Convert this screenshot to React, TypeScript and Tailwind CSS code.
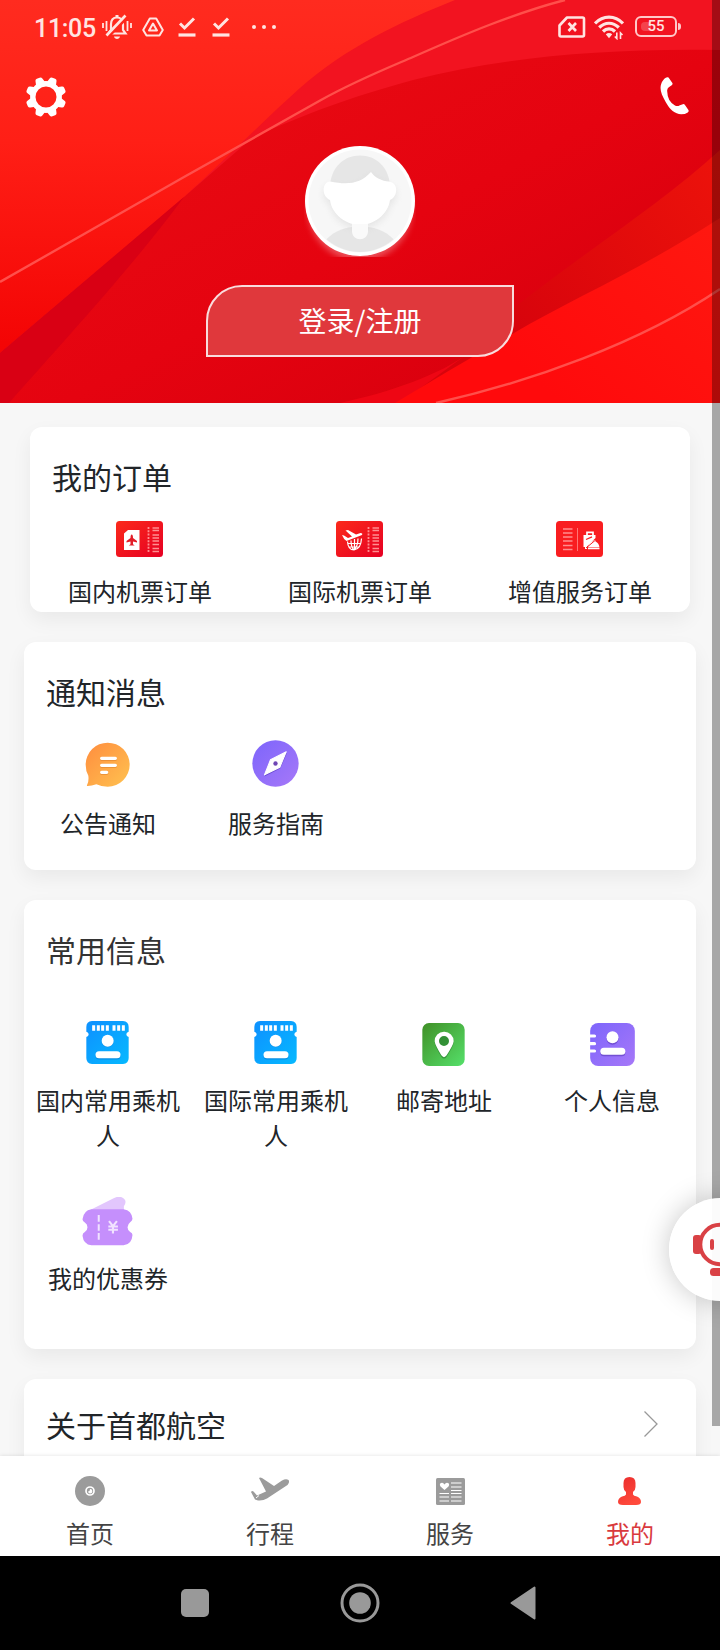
import type { ReactNode } from "react";

const HeaderBackground = () => (
  <svg viewBox="0 0 720 403" className="absolute inset-0 w-full h-full" fill="none">
    <defs>
      <linearGradient id="base" x1="0" y1="0" x2="0" y2="1">
        <stop offset="0" stopColor="#ff2b1f" />
        <stop offset="0.35" stopColor="#ff1f16" />
        <stop offset="0.85" stopColor="#f40505" />
        <stop offset="1" stopColor="#f40004" />
      </linearGradient>
      <linearGradient id="deep" x1="300" y1="60" x2="480" y2="400" gradientUnits="userSpaceOnUse">
        <stop offset="0" stopColor="#e70a12" />
        <stop offset="0.5" stopColor="#e50310" />
        <stop offset="1" stopColor="#d9000e" />
      </linearGradient>
      <linearGradient id="fold" x1="720" y1="170" x2="520" y2="330" gradientUnits="userSpaceOnUse">
        <stop offset="0" stopColor="#ec120b" />
        <stop offset="1" stopColor="#d8040c" />
      </linearGradient>
      <linearGradient id="corner" x1="720" y1="220" x2="560" y2="403" gradientUnits="userSpaceOnUse">
        <stop offset="0" stopColor="#ff1810" />
        <stop offset="1" stopColor="#ff0a0c" />
      </linearGradient>
    </defs>
    <rect width="720" height="403" fill="url(#base)" />
    <path d="M455 0C400 22 345 48 300 88C262 122 225 160 184 197L0 353V403H720V0Z" fill="#f21320" />
    <path d="M720 50C600 48 500 58 413 80C350 97 300 116 252 138L184 197L0 353V403H720Z" fill="url(#deep)" />
    <path d="M184 197L0 353V403H9C60 345 130 270 184 197Z" fill="#d90014" />
    <path d="M720 150C660 205 580 255 510 311L440 372L350 403H720Z" fill="url(#fold)" />
    <path d="M470 352C440 375 390 392 340 403H400Z" fill="#ee0614" />
    <path d="M720 218C640 270 570 300 514 333C470 358 430 382 395 403H720Z" fill="url(#corner)" />
    <path d="M0 282L184 177L321 100C355 81 385 69 413 57C465 34 515 13 565 0" stroke="#ff4f4b" strokeWidth="2.400" />
    <path d="M436 403C530 382 640 343 720 289" stroke="#ff4f4b" strokeWidth="2.400" />
  </svg>
);

const CheckIcon = () => (
  <svg viewBox="0 0 18 20" className="w-[18px] h-5" fill="none" stroke="#ffe4e1">
    <path d="M2 6.500L6.500 11L16 1.500" strokeWidth="3" />
    <path d="M.5 18H17.500" strokeWidth="3.200" />
  </svg>
);

const StatusBar = () => (
  <div className="relative flex h-[54px] items-center pl-[34px] pr-[39px] text-[#ffe4e1]">
    <span className="w-[62px] font-[Roboto] text-[25px] font-medium leading-none tracking-[-0.3px] whitespace-nowrap pt-[3px]">11:05</span>
    <svg viewBox="0 0 30 26" className="ml-1.5 w-[30px] h-[26px]" fill="none" stroke="currentColor" strokeWidth="2.200">
      <path d="M6.500 19.500H23.500L21 16V10.500C21 6 18.500 3.500 15 3.500C11.500 3.500 9 6 9 10.500V16Z" />
      <path d="M15 1V4" strokeWidth="3" />
      <path d="M12 22.500H18C17.500 25.800 12.500 25.800 12 22.500Z" fill="currentColor" stroke="none" />
      <path d="M1 9V14M4.500 7V17M25.500 7V17M29 9V14" strokeWidth="1.800" />
      <path d="M6.500 22.500L25.500 3" stroke="#ff281c" strokeWidth="3" />
      <path d="M4.500 21.500L23.500 1.500" strokeWidth="2.600" />
    </svg>
    <svg viewBox="0 0 22 20" className="ml-[10px] w-[22px] h-5" fill="none" stroke="currentColor" strokeWidth="2" strokeLinejoin="round">
      <path d="M7.800 1.500H14.200L20.800 13L17.500 18.500H4.500L1.200 13Z" />
      <path d="M11 6.500L15 13.500H7Z" />
    </svg>
    <div className="ml-3.5 flex gap-4 -mt-px">
      <CheckIcon />
      <CheckIcon />
    </div>
    <div className="ml-[22px] flex gap-1.5">
      {[0, 1, 2].map((v) => (
        <span key={v} className="w-1 h-1 rounded-full bg-current" />
      ))}
    </div>
    <svg viewBox="0 0 28 22" className="ml-auto w-7 h-[22px]" fill="none" stroke="currentColor" strokeWidth="2.600">
      <path d="M9 1.500H24.500Q26 1.500 26 3V19Q26 20.500 24.500 20.500H3Q1.500 20.500 1.500 19V9.500Z" strokeLinejoin="round" />
      <path d="M10.500 7L18 15M18 7L10.500 15" />
    </svg>
    <svg viewBox="0 0 30 25" className="ml-2 w-[30px] h-[25px]" fill="none" stroke="currentColor" strokeWidth="3.200">
      <path d="M1 8.500C9 0 21 0 29 8.500" />
      <path d="M5.200 12.500C11 6.800 19 6.800 24.800 12.500" />
      <path d="M9 16.500C12.500 13 17.500 13 21 16.500" />
      <path d="M11.800 19.200Q15 16.800 18.200 19.200L15 23.200Z" fill="currentColor" stroke="none" />
      <path d="M22.800 17.500V23.500L20.800 21.500M26.500 24V18L28.500 20" strokeWidth="1.600" />
    </svg>
    <div className="ml-[11px] -mt-0.5 flex items-center gap-px">
      <div className="relative flex w-[42px] h-[21px] items-center justify-center rounded-md border-2 border-[#ffc9c9]">
        <span className="absolute left-1 top-1 bottom-1 w-2.5 rounded-l-sm bg-white/20" />
        <span className="relative font-[Roboto] text-[15px] font-medium leading-none">55</span>
      </div>
      <span className="w-[3px] h-[7px] rounded-r-sm bg-[#ffc9c9]" />
    </div>
  </div>
);

const GearIcon = () => (
  <svg viewBox="-20 -20 40 40" className="w-10 h-10">
    <circle r="13.200" fill="none" stroke="#fff" strokeWidth="5.400" />
    {[22.5, 67.5, 112.5, 157.5, 202.5, 247.5, 292.5, 337.5].map((deg) => (
      <path
        key={deg}
        d="M-5 -13.500L-3.700 -18.500Q-3.300 -20.300 -1.500 -20.300H1.500Q3.300 -20.300 3.700 -18.500L5 -13.500Z"
        fill="#fff"
        transform={`rotate(${deg})`}
      />
    ))}
  </svg>
);

const PhoneIcon = () => (
  <svg viewBox="0 0 87 116" className="mt-px w-[29px] h-[38px]" fill="#fff">
    <path d="M21 1Q25 0 28 5L37 18Q39 22 35 25L26 31Q21 35 21 42Q22 75 45 87Q52 91 60 86L69 83Q73 82 76 86L86 101Q88 105 84 108Q76 114 64 114C45 113 29 99 17 77C6 58 0 44 1 31C2 18 10 4 21 1Z" />
  </svg>
);

const Avatar = () => (
  <svg viewBox="0 0 112 111" className="mt-px w-28 h-[111px] overflow-hidden">
    <defs>
      <clipPath id="face">
        <circle cx="56" cy="55" r="51" />
      </clipPath>
      <filter id="soft" x="-30%" y="-30%" width="160%" height="160%">
        <feGaussianBlur stdDeviation="3" />
      </filter>
    </defs>
    <circle cx="56" cy="63" r="52" fill="#fff" opacity="0.3" filter="url(#soft)" />
    <circle cx="56" cy="55" r="55" fill="#fff" />
    <circle cx="56" cy="55" r="51.500" fill="#f7f7f7" />
    <g clipPath="url(#face)">
      <path d="M26 40C27 21 40 9.500 56 9.500C72 9.500 85 21 86 40Z" fill="#e6e6e6" />
      <path d="M18 98C28 86 38 82 48 81H64C74 82 84 86 94 98V111H18Z" fill="#e6e6e6" />
      <path d="M26 36C44 40 56 39 67 26C71 32 78 35 85 36C95 38 94 52 86 56C83 70 69 80 56 80C43 80 29 70 26 55C17 51 18 37 26 36Z" fill="#ccc" opacity="0.400" filter="url(#soft)" transform="translate(0 3)" />
      <path d="M26 35.500C44 39 56 38 67 26C71 32 78 35 85 35.500C95 37 94 51 86 54C84 69 69 79 56 79C43 79 28 69 26 54C17 50 18 36 26 35.500Z" fill="#fff" />
      <path d="M48 78H64V85C64 96 48 96 48 85Z" fill="#fafafa" />
    </g>
  </svg>
);

const Header = () => (
  <header className="relative flex h-[403px] shrink-0 flex-col">
    <HeaderBackground />
    <StatusBar />
    <div className="relative flex justify-between items-start pl-[25.5px] pr-[31px] pt-[22px] h-[91px]">
      <div className="pt-px">
        <GearIcon />
      </div>
      <PhoneIcon />
    </div>
    <div className="relative flex flex-col items-center">
      <Avatar />
      <button className="mt-7 flex w-[308px] h-[72px] items-center justify-center rounded-tl-[36px] rounded-br-[36px] border-2 border-[#f9dcdd] bg-[#e0383c] pb-0.5 text-[28px] text-white">
        登录/注册
      </button>
    </div>
  </header>
);

const TicketDefs = () => (
  <defs>
    <linearGradient id="ticket" x1="0" y1="0" x2="1" y2="1">
      <stop offset="0" stopColor="#fb2a1b" />
      <stop offset="1" stopColor="#e60023" />
    </linearGradient>
  </defs>
);

const TicketStub = () => (
  <>
    <path d="M32.500 6V32" stroke="#ff8f90" strokeWidth="1.800" strokeDasharray="2 1.300" />
    <path d="M36.500 7H43M36.500 9.500H43M36.500 14H43M36.500 17H43M36.500 20H43M36.500 23.500H43M36.500 27.500H43M36.500 30.500H43" stroke="#ff8f90" strokeWidth="1.400" />
  </>
);

const DomesticTicketIcon = () => (
  <svg viewBox="0 0 47 36" className="w-[47px] h-9">
    <TicketDefs />
    <rect width="47" height="36" rx="3.500" fill="url(#ticket)" />
    <path d="M12 9H23.500V29H8V12.500Z" fill="#fff" />
    <path d="M15.700 13.500Q17 13.500 17 17L21 20V21.500L17 20.500V23.200L18.700 24.500H12.800L14.500 23.200V20.500L10.500 21.500V20L14.500 17Q14.500 13.500 15.700 13.500Z" fill="#e21d28" />
    <TicketStub />
  </svg>
);

const InternationalTicketIcon = () => (
  <svg viewBox="0 0 47 36" className="w-[47px] h-9">
    <rect width="47" height="36" rx="3.500" fill="url(#ticket)" />
    <path d="M6 14L8 14.500L12 17L16 15.500L9.500 9.500L12 9L20 13.500L24.500 12Q27 12 26 14L10.500 20Q7.500 18 6 14Z" fill="#fff" />
    <g fill="none" stroke="#fff" strokeWidth="1.200">
      <path d="M11.500 20.500Q12 29 18 29Q25 28 25.500 17.500M11.500 22.500H25M13 26H23.500M18.500 18V29M15 19.500Q15 26 18 29M22 17.500Q22 25 18 29" />
    </g>
    <TicketStub />
  </svg>
);

const ServiceTicketIcon = () => (
  <svg viewBox="0 0 47 36" className="w-[47px] h-9">
    <rect width="47" height="36" rx="3.500" fill="#f91d20" />
    <path d="M7 8H16.500M7 12H16.500M7 16H16.500M7 20H16.500M7 24.500H16.500M7 28.500H16.500" stroke="#ff8d8d" strokeWidth="1.600" />
    <path d="M21.500 7V30" stroke="#ff7474" strokeWidth="1" />
    <path d="M31 14V11.300H37V14" fill="none" stroke="#fff" strokeWidth="1.700" />
    <path d="M27.500 14H39.500V17L31 25.500V28H29V26H27.500Z" fill="#fff" />
    <path d="M30 18.500L36 15.800" stroke="#f91d20" strokeWidth="1.300" />
    <path d="M32 26.500C32.500 21.500 35 20.500 37.500 20.300V19H39.500V20.500Q43 22 43.500 26.500ZM32 27H43.500V28.300H32Z" fill="#fff" />
    <path d="M30 27L42 17" stroke="#f91d20" strokeWidth="1" />
  </svg>
);

const NoticeIcon = () => (
  <svg viewBox="0 0 135 135" className="mt-px w-[45px] h-[45px]">
    <defs>
      <linearGradient id="notice" x1="0" y1="0" x2="1" y2="1">
        <stop offset="0.100" stopColor="#ff9240" />
        <stop offset="1" stopColor="#ffc250" />
      </linearGradient>
    </defs>
    <path d="M68 2A66 66 0 1 1 68 134Q48 134 34 127Q20 132 8 132Q4 132 7 127Q12 116 10 101Q2 87 2 68A66 66 0 0 1 68 2Z" fill="url(#notice)" />
    <path d="M50 52H91M50 73H91M50 94H65" stroke="#d97c25" strokeOpacity="0.500" strokeWidth="10" strokeLinecap="round" />
    <path d="M50 49H91M50 70H91M50 91H65" stroke="#fff" strokeWidth="10" strokeLinecap="round" />
  </svg>
);

const GuideIcon = () => (
  <svg viewBox="0 0 140 140" className="w-[47px] h-[47px]">
    <defs>
      <linearGradient id="violet" x1="0" y1="0" x2="1" y2="1">
        <stop offset="0.100" stopColor="#8167fb" />
        <stop offset="1" stopColor="#a678f8" />
      </linearGradient>
    </defs>
    <circle cx="70" cy="70" r="69" fill="url(#violet)" />
    <path d="M104 39L84 85L37 109L55 63Z" fill="#5135b8" opacity="0.600" />
    <path d="M102 35L83 81L37 104L55 59Z" fill="#fff" stroke="#fff" strokeWidth="3" strokeLinejoin="round" />
    <circle cx="70" cy="70" r="6.500" fill="#6e46b4" />
  </svg>
);

const PassengerIcon = () => (
  <svg viewBox="0 0 129 129" className="-mt-0.5 w-[43px] h-[43px]">
    <defs>
      <linearGradient id="blue" x1="0" y1="0" x2="1" y2="1">
        <stop offset="0.100" stopColor="#0d94ff" />
        <stop offset="1" stopColor="#06b9ff" />
      </linearGradient>
    </defs>
    <path d="M18 0H111Q128 1 128 18V32Q121 34 121 40Q121 46 128 48V111Q128 128 111 129H18Q1 128 1 111V48Q8 46 8 40Q8 34 1 32V18Q1 1 18 0Z" fill="url(#blue)" />
    <path d="M23 13V29M37 13V29M50 13V29M64 13V29M84 13V29M98 13V29M112 13V29" stroke="#fff" strokeWidth="9" />
    <circle cx="65" cy="61" r="18" fill="#087bd0" opacity="0.600" />
    <path d="M39 105H93" stroke="#087bd0" strokeOpacity="0.600" strokeWidth="21" strokeLinecap="round" />
    <circle cx="65" cy="59" r="18" fill="#fff" />
    <path d="M39 101H93" stroke="#fff" strokeWidth="21" strokeLinecap="round" />
  </svg>
);

const AddressIcon = () => (
  <svg viewBox="0 0 127 129" className="mt-px w-[43px] h-[43px]">
    <defs>
      <linearGradient id="green" x1="0" y1="0" x2="1" y2="1">
        <stop offset="0.050" stopColor="#41942a" />
        <stop offset="1" stopColor="#55e06a" />
      </linearGradient>
    </defs>
    <rect width="127" height="129" rx="20" fill="url(#green)" />
    <path d="M65 30A28 28 0 0 1 94 59Q93 70 73 101Q65 112 57 101Q38 70 37 59A28 28 0 0 1 65 30Z" fill="#23762a" opacity="0.600" />
    <path fillRule="evenodd" d="M65 26A28 28 0 0 1 94 55Q93 66 73 97Q65 108 57 97Q38 66 37 55A28 28 0 0 1 65 26ZM65 39A15 15 0 1 0 65 69A15 15 0 1 0 65 39Z" fill="#fff" />
  </svg>
);

const ProfileIcon = () => (
  <svg viewBox="0 0 134 129" className="mt-px ml-0.5 w-[45px] h-[43px]">
    <rect width="134" height="129" rx="24" fill="url(#violet)" />
    <path d="M0 39H13M0 62H13M0 84H13" stroke="#fff" strokeWidth="9.500" strokeLinecap="round" />
    <circle cx="67" cy="47" r="18" fill="#5b3bb9" opacity="0.600" />
    <path d="M41 89H95" stroke="#5b3bb9" strokeOpacity="0.600" strokeWidth="21" strokeLinecap="round" />
    <circle cx="67" cy="43" r="18" fill="#fff" />
    <path d="M41 85H95" stroke="#fff" strokeWidth="21" strokeLinecap="round" />
  </svg>
);

const CouponIcon = () => (
  <svg viewBox="0 0 153 148" className="w-[51px] h-[49px]">
    <path d="M18 42L92 5Q116 -8 129 8Q134 16 126 28V42Z" fill="#e2c6fd" />
    <path d="M28 37H125Q150 41 152 66Q152 72 145 76Q137 82 137 91Q137 100 145 106Q152 109 152 115Q150 144 125 146H28Q4 143 1 117Q1 110 8 106Q16 100 16 91Q16 82 8 77Q1 73 1 67Q4 41 28 37Z" fill="#c58ffc" />
    <path d="M50 54V75M50 82V102M50 109V129" stroke="#f1e3ff" strokeWidth="6" />
    <path d="M81 73L93 88L105 73M93 88V110M79 89H108M79 99H108" stroke="#f1e3ff" strokeWidth="6.500" fill="none" />
  </svg>
);

interface IEntry {
  label: string;
  icon: ReactNode;
}

const orders: IEntry[] = [
  { label: "国内机票订单", icon: <DomesticTicketIcon /> },
  { label: "国际机票订单", icon: <InternationalTicketIcon /> },
  { label: "增值服务订单", icon: <ServiceTicketIcon /> },
];

const notices: IEntry[] = [
  { label: "公告通知", icon: <NoticeIcon /> },
  { label: "服务指南", icon: <GuideIcon /> },
];

const commonInfo: IEntry[] = [
  { label: "国内常用乘机人", icon: <PassengerIcon /> },
  { label: "国际常用乘机人", icon: <PassengerIcon /> },
  { label: "邮寄地址", icon: <AddressIcon /> },
  { label: "个人信息", icon: <ProfileIcon /> },
];

const Entry = ({ label, icon, gap = "mt-[13px]" }: IEntry & { gap?: string }) => (
  <div className="flex flex-col items-center px-3">
    <div className="flex h-[51px] items-center justify-center pr-px">{icon}</div>
    <span className={`text-center text-2xl leading-[35px] ${gap}`}>{label}</span>
  </div>
);

const CardTitle = ({ children }: { children: ReactNode }) => (
  <h2 className="pl-[22px] text-[30px] leading-[45px]">{children}</h2>
);

const Card = ({ className, children }: { className: string; children: ReactNode }) => (
  <section className={`shrink-0 rounded-xl bg-white shadow-[0_8px_20px_rgba(0,0,0,0.06)] ${className}`}>{children}</section>
);

const HomeIcon = () => (
  <svg viewBox="0 0 30 30" className="w-[30px] h-[30px]">
    <circle cx="15" cy="15" r="15" fill="#9b9b9b" />
    <circle cx="15" cy="15" r="4" fill="none" stroke="#fff" strokeWidth="1.700" />
    <path d="M15 13A2.200 2.200 0 1 1 13 15.500Q15 15.500 15 13Z" fill="#fff" />
  </svg>
);

const TripIcon = () => (
  <svg viewBox="0 0 38 24" className="-mt-1 w-[38px] h-6" fill="#9b9b9b">
    <path d="M8 1Q9 0 11 1L23 9L31 3.500Q35 1.500 37.500 3Q39 5 36.500 8L16 21.500Q12 24 7 23.500L4 22.500L0 15Q1 13.500 2.500 14.500L6 18.500L15 14.500Z" />
    <path d="M5 21L8 18.500" stroke="#fff" />
  </svg>
);

const ServiceIcon = () => (
  <svg viewBox="0 0 29 27" className="w-[29px] h-[27px]">
    <rect width="29" height="27" rx="1.500" fill="#9b9b9b" />
    <path d="M8.500 12L4.500 8.500Q3 6 5 5Q7 4 8.500 6.500Q10 4 12 5Q14 6 12.500 8.500Z" fill="#fff" />
    <path d="M15 5H25.500M15 9H25.500M15 12.500H25.500M3.500 15.500H13M15 15.500H25.500M3.500 19H13M15 19H25.500M3.500 23H13M15 23H25.500" stroke="#fff" strokeWidth="1.200" />
  </svg>
);

const MineIcon = () => (
  <svg viewBox="0 0 23 28" className="mr-0.5 w-[23px] h-7">
    <defs>
      <linearGradient id="mine" x1="0" y1="0" x2="0.500" y2="1">
        <stop offset="0" stopColor="#ea2c2c" />
        <stop offset="1" stopColor="#ff4a3c" />
      </linearGradient>
    </defs>
    <path d="M11.500 0Q17.500 0 17.500 6V10Q17.500 13 15 15V17.500Q15.500 19 19 19.500Q23 21 23 25Q23 28 18 28H5Q0 28 0 25Q0 21 4 19.500Q7.500 19 8 17.500V15Q5.500 13 5.500 10V6Q5.500 0 11.500 0Z" fill="url(#mine)" />
  </svg>
);

const tabs: IEntry[] = [
  { label: "首页", icon: <HomeIcon /> },
  { label: "行程", icon: <TripIcon /> },
  { label: "服务", icon: <ServiceIcon /> },
  { label: "我的", icon: <MineIcon /> },
];

const TabBar = () => (
  <nav className="relative grid h-[100px] shrink-0 grid-cols-4 bg-white shadow-[0_0_4px_rgba(0,0,0,0.12)]">
    {tabs.map(({ label, icon }) => (
      <div key={label} className={`flex flex-col items-center pt-5 ${label === "我的" ? "text-[#d93a3e]" : "text-[#444]"}`}>
        <div className="flex h-[30px] items-center">{icon}</div>
        <span className="mt-[9px] text-2xl leading-[35px]">{label}</span>
      </div>
    ))}
  </nav>
);

const SystemBar = () => (
  <div className="relative flex h-[94px] shrink-0 items-center justify-between bg-black pl-[181px] pr-[184px]">
    <span className="w-7 h-7 rounded-[5px] bg-[#999]" />
    <svg viewBox="0 0 40 40" className="w-10 h-10">
      <circle cx="20" cy="20" r="18" fill="none" stroke="#999" strokeWidth="3" />
      <circle cx="20" cy="20" r="10.800" fill="#999" />
    </svg>
    <svg viewBox="0 0 26 34" className="w-[26px] h-[34px]">
      <path d="M24.500 1.500V32.500L1.500 17Z" fill="#999" stroke="#999" strokeWidth="2" strokeLinejoin="round" />
    </svg>
  </div>
);

const AssistantButton = () => (
  <div className="absolute left-[669px] top-[1198px] h-[103px] w-[103px] rounded-full bg-white/95 shadow-[0_0_28px_rgba(0,0,0,0.22)]">
    <svg viewBox="0 0 103 103" className="w-full h-full">
      <circle cx="51" cy="46.500" r="19.700" fill="none" stroke="#d94145" strokeWidth="4" />
      <rect x="24" y="37" width="8.500" height="19" rx="3" fill="#d94145" />
      <rect x="69.500" y="37" width="8.500" height="19" rx="3" fill="#d94145" />
      <path d="M43 43V50M59 43V50" stroke="#d94145" strokeWidth="4" strokeLinecap="round" />
      <rect x="41" y="70" width="20" height="8" rx="3.500" fill="#d94145" />
    </svg>
  </div>
);

export default function App() {
  return (
    <div className="relative flex h-[1650px] w-[720px] flex-col overflow-hidden bg-[#f7f7f7] font-['Noto_Sans_CJK_SC',sans-serif] text-[#212529]">
      <Header />
      <main className="flex min-h-0 flex-1 flex-col gap-[30px] overflow-hidden px-6 pt-6">
        <Card className="mx-1.5 h-[185px] pt-[27px]">
          <CardTitle>我的订单</CardTitle>
          <div className="mt-3.5 grid grid-cols-3">
            {orders.map((v) => (
              <Entry key={v.label} gap="mt-[9px]" {...v} />
            ))}
          </div>
        </Card>
        <Card className="h-[228px] pt-[27px]">
          <CardTitle>通知消息</CardTitle>
          <div className="mt-6 grid grid-cols-4">
            {notices.map((v) => (
              <Entry key={v.label} gap="mt-4" {...v} />
            ))}
          </div>
        </Card>
        <Card className="h-[449px] pt-[27px]">
          <div className="text-[#333]">
            <CardTitle>常用信息</CardTitle>
          </div>
          <div className="mt-[46px] grid grid-cols-4">
            {commonInfo.map((v) => (
              <Entry key={v.label} {...v} />
            ))}
          </div>
          <div className="mt-11 grid grid-cols-4">
            <Entry label="我的优惠券" icon={<CouponIcon />} />
          </div>
        </Card>
        <Card className="flex h-[110px] items-start justify-between pr-[38px] pt-[23px]">
          <CardTitle>关于首都航空</CardTitle>
          <svg viewBox="0 0 14 26" className="mt-[9px] w-3.5 h-[26px]" fill="none" stroke="#999" strokeWidth="1.300">
            <path d="M.5 .5L13 13L.5 25.500" />
          </svg>
        </Card>
      </main>
      <TabBar />
      <SystemBar />
      <div className="absolute right-0 top-0 h-[1426px] w-2 bg-black/32" />
      <AssistantButton />
    </div>
  );
}
